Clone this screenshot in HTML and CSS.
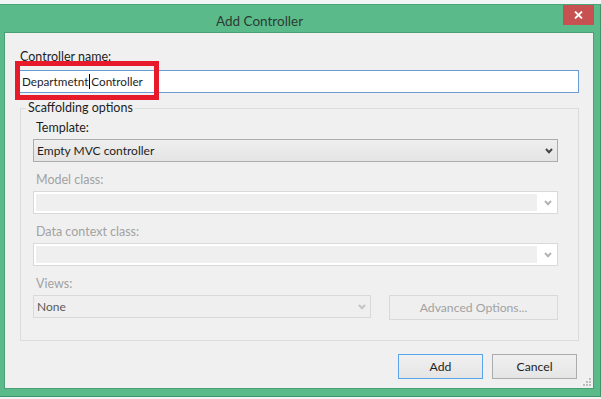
FILE: index.html
```html
<!DOCTYPE html>
<html lang="en">
<head>
    <meta charset="UTF-8">
    <meta name="viewport" content="width=device-width, initial-scale=1.0">
    <title>Add Controller</title>
    <link rel="stylesheet" href="styles.css">
</head>
<body>
    <div class="window">
        <div class="titlebar">
            <div class="title">Add Controller</div>
            <button class="close" aria-label="Close">
                <svg width="9" height="8" viewBox="0 0 9 8"><path d="M1 0.5 L8 7.5 M8 0.5 L1 7.5" stroke="#fff" stroke-width="1.8" fill="none"/></svg>
            </button>
        </div>

        <div class="content">
            <div class="label name-label">Controller name:</div>
            <div class="name-field">
                <div class="textbox">Departmetnt<span class="caret"></span>Controller</div>
                <div class="highlight"></div>
            </div>

            <fieldset class="group">
                <legend>Scaffolding options</legend>

                <div class="field">
                    <div class="label">Template:</div>
                    <div class="combo">
                        <span class="combo-text">Empty MVC controller</span>
                        <svg class="arrow" width="8" height="6" viewBox="0 0 8 6"><path d="M1 1 L4 4.2 L7 1" stroke="#444" stroke-width="2" fill="none"/></svg>
                    </div>
                </div>

                <div class="field">
                    <div class="label off">Model class:</div>
                    <div class="combo combo-off">
                        <span class="combo-well"></span>
                        <span class="combo-btn">
                            <svg width="8" height="6" viewBox="0 0 8 6"><path d="M1 1 L4 4.2 L7 1" stroke="#b4b4b4" stroke-width="2" fill="none"/></svg>
                        </span>
                    </div>
                </div>

                <div class="field">
                    <div class="label off">Data context class:</div>
                    <div class="combo combo-off">
                        <span class="combo-well"></span>
                        <span class="combo-btn">
                            <svg width="8" height="6" viewBox="0 0 8 6"><path d="M1 1 L4 4.2 L7 1" stroke="#b4b4b4" stroke-width="2" fill="none"/></svg>
                        </span>
                    </div>
                </div>

                <div class="field last">
                    <div class="label off">Views:</div>
                    <div class="views-row">
                        <div class="combo combo-views">
                            <span class="combo-text">None</span>
                            <svg class="arrow" width="8" height="6" viewBox="0 0 8 6"><path d="M1 1 L4 4.2 L7 1" stroke="#c4c4c4" stroke-width="2" fill="none"/></svg>
                        </div>
                        <button class="btn btn-off">Advanced Options...</button>
                    </div>
                </div>
            </fieldset>

            <div class="actions">
                <button class="btn btn-default">Add</button>
                <button class="btn">Cancel</button>
            </div>

            <svg class="grip" width="8" height="8" viewBox="0 0 8 8">
                <rect x="6" y="0" width="2" height="2" fill="#bdbdbd"/>
                <rect x="3" y="3" width="2" height="2" fill="#bdbdbd"/>
                <rect x="6" y="3" width="2" height="2" fill="#bdbdbd"/>
                <rect x="0" y="6" width="2" height="2" fill="#bdbdbd"/>
                <rect x="3" y="6" width="2" height="2" fill="#bdbdbd"/>
                <rect x="6" y="6" width="2" height="2" fill="#bdbdbd"/>
            </svg>
        </div>
    </div>
</body>
</html>
```

FILE: styles.css
```css
* {
    margin: 0;
    padding: 0;
    box-sizing: border-box;
}

body {
    background: #f1f3f5;
    padding-top: 4px;
    font-family: 'Lato', 'Open Sans', sans-serif;
    font-size: 12.5px;
    color: #1e1e1e;
    overflow: hidden;
}

.window {
    width: 601px;
    height: 393px;
    background: #5aba89;
    border-top: 1px solid #4aa577;
    border-right: 1px solid #3f9468;
    border-bottom: 1px solid #3f9468;
    padding: 0 6px 0 4px;
    display: flex;
    flex-direction: column;
}

/* barre de titre */
.titlebar {
    height: 27px;
    display: flex;
    align-items: flex-start;
    margin-right: -6px;
    margin-left: -4px;
}

.title {
    width: 519px;
    text-align: center;
    font-size: 13.5px;
    line-height: 24px;
    color: #2d3a33;
    padding-top: 4px;
}

.close {
    width: 31px;
    height: 20px;
    margin-left: 44px;
    background: #c75050;
    border: none;
    display: flex;
    align-items: center;
    justify-content: center;
}

.content {
    position: relative;
    height: 357px;
    background: #f0f0f0;
    border: 1px solid #4a9f74;
    padding: 16px 14px 0 12px;
}

.label {
    line-height: 16px;
    margin-left: 3px;
}

.label.off {
    color: #a2a2a2;
}

.name-field {
    position: relative;
    margin-top: 5px;
}

.textbox {
    height: 23px;
    background: #fff;
    border: 1px solid #6a9bd5;
    line-height: 20px;
    padding-left: 4px;
    font-size: 11.7px;
    white-space: nowrap;
}

.caret {
    display: inline-block;
    width: 1px;
    height: 15px;
    background: #000;
    vertical-align: -3px;
    margin: 0 1px;
}

/* cadre rouge ajouté sur la capture */
.highlight {
    position: absolute;
    left: -2px;
    top: -9px;
    width: 144px;
    height: 39px;
    border: 5px solid #e71a2b;
}

.group {
    margin: 7px 0 0 3px;
    border: 1px solid #dcdcdc;
    padding: 4px 20px 20px 12px;
    min-width: 0;
}

.group legend {
    line-height: 16px;
    padding: 0 2px;
    margin-left: -7px;
}

.group .label {
    margin-left: 3px;
}

.field {
    margin-bottom: 10px;
}

.field.last {
    margin-bottom: 0;
}

.field .label {
    margin-bottom: 3px;
}

.combo {
    height: 23px;
    display: flex;
    align-items: center;
    justify-content: space-between;
    border: 1px solid #acacac;
    background: linear-gradient(#efefef, #e4e4e4);
    padding: 0 4px 0 3px;
    font-size: 12px;
}

.combo .arrow {
    margin-top: 1px;
}

.combo-off {
    border-color: #d9d9d9;
    background: #fff;
    padding: 2px 0 2px 2px;
}

.combo-well {
    flex: 1;
    height: 100%;
    background: #efefef;
}

.combo-btn {
    width: 20px;
    display: flex;
    justify-content: center;
    padding-left: 1px;
}

.views-row {
    display: flex;
    gap: 18px;
}

.combo-views {
    width: 338px;
    border-color: #d9d9d9;
    background: #efefef;
    color: #5a5a5a;
}

.btn {
    font-family: inherit;
    font-size: 12.2px;
    height: 25px;
    background: linear-gradient(#f0f0f0, #e5e5e5);
    border: 1px solid #acacac;
    color: #1e1e1e;
}

.btn-off {
    flex: 1;
    background: #efefef;
    border-color: #d9d9d9;
    color: #a2a2a2;
}

.actions {
    display: flex;
    justify-content: flex-end;
    gap: 9px;
    margin: 13px 2px 0 0;
}

.actions .btn {
    width: 85px;
}

.btn-default {
    border-color: #5aa5ea;
}

.grip {
    position: absolute;
    right: 2px;
    bottom: 2px;
}
```
